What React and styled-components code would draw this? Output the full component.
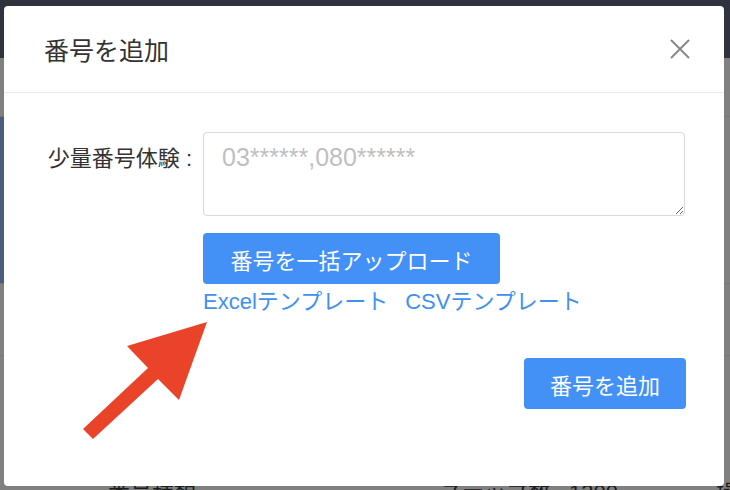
import styled, { createGlobalStyle } from 'styled-components'

const GlobalStyle = createGlobalStyle`
  html, body {
    margin: 0;
    padding: 0;
    background: #808080;
    font-family: "Liberation Sans", "Noto Sans CJK JP", sans-serif;
  }
  * { box-sizing: border-box; }
`

const Page = styled.div`
  position: relative;
  width: 730px;
  height: 490px;
  overflow: hidden;
  background: #808080;
`

const TopBar = styled.div`
  height: 58px;
  background: #2f333e;
`

const Banner = styled.div`
  margin-top: 58px;
  height: 168px;
  border-top: 1px solid #767676;
  border-bottom: 1px solid #767676;
  display: flex;
`

const BlueCard = styled.div`
  width: 300px;
  height: 100%;
  background: #4a5d7b;
`

const TableRow = styled.div`
  height: 72px;
  border-bottom: 1px solid #767676;
`

const TableHead = styled.div`
  display: grid;
  grid-template-columns: 332px 129px 147px 1fr;
  padding: 124px 0 0 108px;
  font-size: 22px;
  line-height: 1.2;
  color: #1c1c1c;
`

const Modal = styled.div`
  position: absolute;
  top: 6px;
  left: 4px;
  width: 720px;
  height: 480px;
  background: #fff;
  border-radius: 4px;
  display: flex;
  flex-direction: column;
`

const Header = styled.div`
  height: 87px;
  padding: 0 34px 0 40px;
  display: flex;
  align-items: center;
  justify-content: space-between;
  border-bottom: 1px solid #e9e9e9;
`

const Title = styled.div`
  font-size: 25px;
  color: #333;
`

const Close = styled.button`
  width: 20px;
  height: 20px;
  padding: 0;
  border: none;
  background: none;
  display: flex;
`

const Body = styled.div`
  padding: 39px 38px 0 0;
  display: flex;
  flex-direction: column;
`

const FormRow = styled.div`
  display: grid;
  grid-template-columns: 199px 1fr;
  padding-right: 1px;
`

const Label = styled.div`
  text-align: right;
  padding: 10px 11px 0 0;
  font-size: 22px;
  line-height: 1.5;
  color: #333;
  white-space: nowrap;
`

const Field = styled.div`
  display: flex;
  flex-direction: column;
  align-items: flex-start;
`

const TextArea = styled.textarea`
  width: 100%;
  height: 84px;
  padding: 8px 18px;
  border: 1px solid #d9d9d9;
  border-radius: 4px;
  font-family: inherit;
  font-size: 25px;
  line-height: 1.3;
  color: #333;
  resize: vertical;
  outline: none;

  &::placeholder {
    color: #bfbfbf;
  }
`

const Button = styled.button`
  width: ${p => p.$w}px;
  height: 51px;
  margin-top: ${p => p.$mt || 0}px;
  border: none;
  border-radius: 4px;
  background: #4390f7;
  color: #fff;
  font-family: inherit;
  font-size: 22px;
  cursor: pointer;
`

const Links = styled.div`
  display: flex;
  gap: 17px;
  margin-top: 5px;
  font-size: 22px;
  line-height: 1.2;
`

const Link = styled.a`
  color: #4090f0;
  text-decoration: none;
  cursor: pointer;
`

const Footer = styled.div`
  display: flex;
  justify-content: flex-end;
  margin-top: 43px;
`

const Arrow = styled.svg`
  position: absolute;
  left: 0;
  top: 0;
  width: 720px;
  height: 480px;
  pointer-events: none;
`

const App = () => {
  return (
    <Page>
      <GlobalStyle />
      <TopBar />
      <Banner>
        <BlueCard />
      </Banner>
      <TableRow />
      <TableHead>
        <span>番号種類</span>
        <span>ステップ数</span>
        <span>1300</span>
        <span>操作</span>
      </TableHead>

      <Modal>
        <Header>
          <Title>番号を追加</Title>
          <Close aria-label="close">
            <svg width="20" height="20" viewBox="0 0 20 20">
              <path d="M1 1 L19 19 M19 1 L1 19" stroke="#888" strokeWidth="2" fill="none" />
            </svg>
          </Close>
        </Header>
        <Body>
          <FormRow>
            <Label>少量番号体験 :</Label>
            <Field>
              <TextArea placeholder="03******,080******" />
              <Button $w={297} $mt={17}>番号を一括アップロード</Button>
              <Links>
                <Link>Excelテンプレート</Link>
                <Link>CSVテンプレート</Link>
              </Links>
            </Field>
          </FormRow>
          <Footer>
            <Button $w={162}>番号を追加</Button>
          </Footer>
        </Body>
        {/* red annotation arrow pointing at the template links */}
        <Arrow viewBox="4 6 720 480">
          <polygon
            points="207,322 127,346 148,368 83,429 93,439 158,379 179,400"
            fill="#e9432a"
          />
        </Arrow>
      </Modal>
    </Page>
  )
}

export default App
